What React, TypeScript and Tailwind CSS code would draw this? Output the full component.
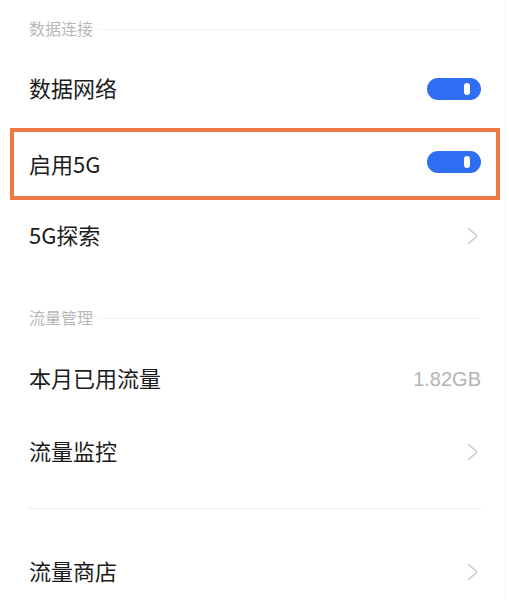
const font = { fontFamily: '"Noto Sans CJK SC", "Noto Sans", sans-serif' };

// little blue pill switch, always on in this screen
const Toggle = () => (
  <div className="w-[54px] h-[22px] rounded-full bg-[#2f6ef2] flex items-center justify-end pr-[11px]">
    <div className="w-[6px] h-[12px] rounded-full bg-white" />
  </div>
);

// thin grey chevron, wider than lucide's
const Arrow = () => (
  <svg width="12" height="18" viewBox="0 0 12 18" fill="none" className="mr-[2px]">
    <path d="M1.5 1.5 L10 9 L1.5 16.5" stroke="#c9c9c9" strokeWidth="1.6" strokeLinecap="round" strokeLinejoin="round" />
  </svg>
);

const SectionHeader = ({ title, className }: { title: string; className: string }) => (
  <div className={`flex items-center gap-[6px] pl-[29px] pr-[24px] ${className}`}>
    <span className="text-[16px] leading-[18px] text-[#b8b8b8] mb-[2px]">{title}</span>
    <div className="flex-1 h-px bg-[#f3f3f3]" />
  </div>
);

const Row = ({ label, right, className }: { label: string; right?: React.ReactNode; className: string }) => (
  <div className={`flex items-center justify-between pl-[29px] pr-[24px] ${className}`}>
    <span className="text-[22px] leading-[26px] text-[#1c1c1c] mb-[5px]">{label}</span>
    {right}
  </div>
);

export default function App() {
  return (
    <div className="w-[506px] h-[600px] overflow-hidden bg-white border-r border-[#f2f2f2] flex flex-col" style={font}>
      <SectionHeader title="数据连接" className="h-[58px] shrink-0" />
      <Row label="数据网络" right={<Toggle />} className="h-[62px] shrink-0" />

      {/* highlighted row */}
      <div className="mt-[8px] ml-[10px] w-[490px] h-[72px] shrink-0 border-4 border-[#f07843] flex items-center justify-between pl-[15px] pr-[15px]">
        <span className="text-[22px] leading-[26px] text-[#1c1c1c] mb-[3px]">启用5G</span>
        <div className="-mt-[5px]">
          <Toggle />
        </div>
      </div>

      <Row label="5G探索" right={<Arrow />} className="h-[72px] shrink-0" />

      <SectionHeader title="流量管理" className="mt-[17px] h-[58px] shrink-0" />
      <Row
        label="本月已用流量"
        right={<span className="text-[20px] text-[#b3b3b3]" style={{ fontFamily: '"Liberation Sans", sans-serif' }}>1.82GB</span>}
        className="h-[64px] shrink-0"
      />
      <Row label="流量监控" right={<Arrow />} className="h-[82px] shrink-0" />

      <div className="h-[30px] shrink-0 flex items-center pl-[28px] pr-[24px]">
        <div className="flex-1 h-px bg-[#f0f0f0]" />
      </div>

      <Row label="流量商店" right={<Arrow />} className="h-[98px] shrink-0" />
    </div>
  );
}
